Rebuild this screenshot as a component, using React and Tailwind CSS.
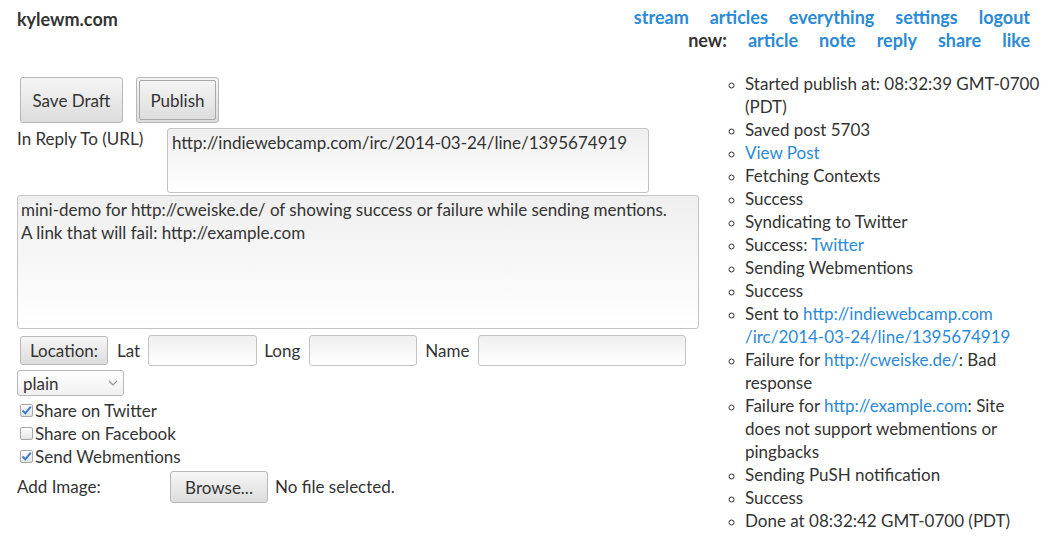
import React from 'react';

const font = { fontFamily: 'Lato, "Liberation Sans", sans-serif' };

const btn =
  'border border-[#b8b8b8] rounded-[3px] bg-gradient-to-b from-[#f6f6f6] to-[#dcdcdc] text-[#333] leading-none';
const field =
  'border border-[#c4c4c4] rounded-[3px] bg-gradient-to-b from-[#efefef] to-white';

const Check = ({ checked }) => (
  <span className="inline-flex w-[13px] h-[13px] mr-[2px] border border-[#a8a8a8] rounded-[2px] bg-gradient-to-b from-white to-[#e4e4e4] items-center justify-center">
    {checked && (
      <svg width="11" height="11" viewBox="0 0 11 11">
        <path d="M1.5 5.5 L4.3 8.3 L9.8 1.6" fill="none" stroke="#3b7bd4" strokeWidth="2" />
      </svg>
    )}
  </span>
);

const A = ({ children }) => <a className="text-[#2b8ad6]">{children}</a>;

const log = [
  ['Started publish at: 08:32:39 GMT-0700 (PDT)'],
  ['Saved post 5703'],
  [<A key="v">View Post</A>],
  ['Fetching Contexts'],
  ['Success'],
  ['Syndicating to Twitter'],
  ['Success: ', <A key="t">Twitter</A>],
  ['Sending Webmentions'],
  ['Success'],
  ['Sent to ', <A key="s">http://indiewebcamp.com /irc/2014-03-24/line/1395674919</A>],
  ['Failure for ', <A key="c">http://cweiske.de/</A>, ': Bad response'],
  ['Failure for ', <A key="e">http://example.com</A>, ': Site does not support webmentions or pingbacks'],
  ['Sending PuSH notification'],
  ['Success'],
  ['Done at 08:32:42 GMT-0700 (PDT)'],
];

export default function App() {
  return (
    <div className="w-[1056px] h-[553px] bg-white text-[#333] text-[17px] overflow-hidden" style={font}>
      <header className="flex justify-between pl-[17px] pr-[26px] pt-[6px]">
        <div className="font-bold text-[18px] leading-[24px] pt-[1px]">kylewm.com</div>
        <div className="flex flex-col items-end font-bold text-[18px] leading-[23px]">
          <div className="flex gap-[21px] text-[#2b8ad6]">
            <a>stream</a><a>articles</a><a>everything</a><a>settings</a><a>logout</a>
          </div>
          <div className="flex gap-[21px] text-[#2b8ad6]">
            <span className="text-[#333]">new:</span><a>article</a><a>note</a><a>reply</a><a>share</a><a>like</a>
          </div>
        </div>
      </header>

      <div className="flex mt-[25px]">
        <div className="w-[716px] pl-[17px] shrink-0">
          <div className="flex gap-[13px] pl-[3px]">
            <button className={`${btn} w-[103px] h-[46px] text-[17px]`}>Save Draft</button>
            <button className={`${btn} w-[83px] h-[46px] p-[2px]`}>
              <span className="flex items-center justify-center w-full h-full border border-[#a8a8a8] rounded-[2px] text-[17px]">Publish</span>
            </button>
          </div>

          <div className="flex mt-[5px]">
            <div className="w-[150px] leading-[22px]">In Reply To (URL)</div>
            <div className={`${field} w-[482px] h-[65px] px-[4px] pt-[3px] leading-[22px]`}>
              http://indiewebcamp.com/irc/2014-03-24/line/1395674919
            </div>
          </div>

          <div className={`${field} w-[682px] h-[134px] mt-[2px] px-[3px] pt-[2px] leading-[23px]`}>
            mini-demo for http://cweiske.de/ of showing success or failure while sending mentions.
            <br />A link that will fail: http://example.com
          </div>

          <div className="flex items-center mt-[6px] pl-[3px]">
            <button className={`${btn} w-[88px] h-[29px] text-[17px]`}>Location:</button>
            <span className="ml-[9px] mr-[8px]">Lat</span>
            <div className={`${field} w-[109px] h-[31px]`} />
            <span className="ml-[7px] mr-[9px]">Long</span>
            <div className={`${field} w-[108px] h-[31px]`} />
            <span className="ml-[8px] mr-[9px]">Name</span>
            <div className={`${field} w-[208px] h-[31px]`} />
          </div>

          <div className={`${btn} mt-[4px] w-[107px] h-[26px] flex items-center justify-between px-[5px] from-white to-[#f0f0f0]`}>
            <span className="text-[17px]">plain</span>
            <svg width="10" height="6" viewBox="0 0 10 6">
              <path d="M1 1 L5 5 L9 1" fill="none" stroke="#999" strokeWidth="1.2" />
            </svg>
          </div>

          <div className="flex flex-col leading-[23px] mt-[3px] pl-[3px]">
            <label className="flex items-center"><Check checked />Share on Twitter</label>
            <label className="flex items-center"><Check />Share on Facebook</label>
            <label className="flex items-center"><Check checked />Send Webmentions</label>
          </div>

          <div className="flex items-center mt-[3px]">
            <span className="w-[153px]">Add Image:</span>
            <button className={`${btn} w-[98px] h-[32px] text-[17px]`}>Browse...</button>
            <span className="ml-[7px]">No file selected.</span>
          </div>
        </div>

        <ul className="w-[326px] pl-[29px] -mt-[5px] leading-[23px] list-[circle] marker:text-[14px]">
          {log.map((item, i) => (
            <li key={i}>{item}</li>
          ))}
        </ul>
      </div>
    </div>
  );
}
